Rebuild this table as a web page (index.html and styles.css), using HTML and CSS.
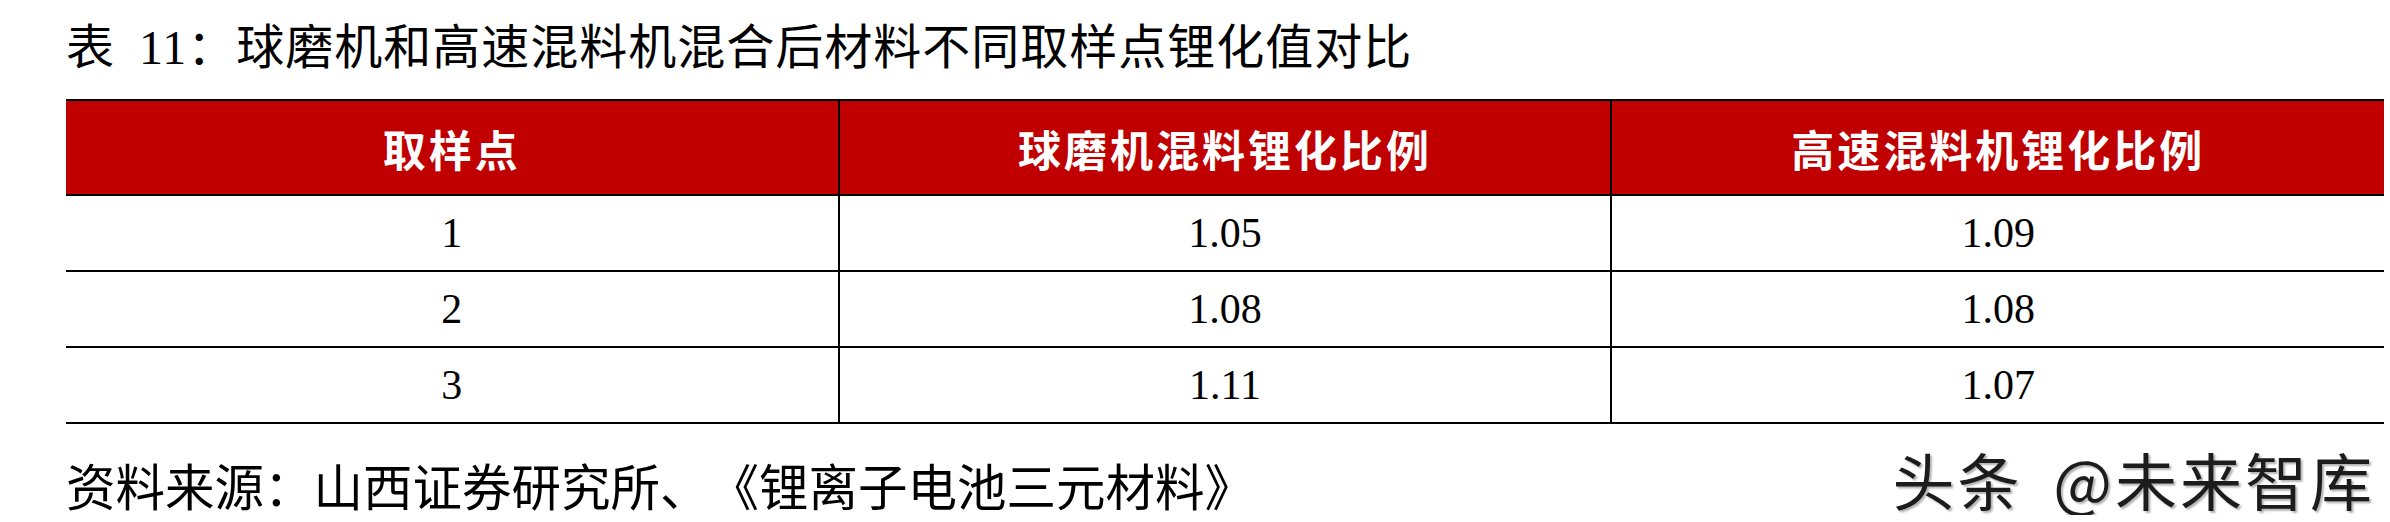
FILE: index.html
```html
<!DOCTYPE html>
<html lang="zh-CN">
<head>
<meta charset="utf-8">
<title>表11</title>
<link rel="stylesheet" href="styles.css">
</head>
<body>
<div class="page">
  <h1 class="title">表<span class="num">11</span>：球磨机和高速混料机混合后材料不同取样点锂化值对比</h1>
  <table class="data">
    <thead>
      <tr><th>取样点</th><th>球磨机混料锂化比例</th><th>高速混料机锂化比例</th></tr>
    </thead>
    <tbody>
      <tr><td>1</td><td>1.05</td><td>1.09</td></tr>
      <tr><td>2</td><td>1.08</td><td>1.08</td></tr>
      <tr><td>3</td><td>1.11</td><td>1.07</td></tr>
    </tbody>
  </table>
  <div class="footer">
    <span class="source">资料来源：山西证券研究所、《锂离子电池三元材料》</span>
    <span class="mark">头条 @未来智库</span>
  </div>
</div>
</body>
</html>
```
FILE: styles.css
```css
body {
  margin: 0;
  background: #fff;
}
.page {
  padding: 20px 6px 0 66px;
  text-spacing-trim: space-all;
}
.title {
  margin: 0 0 23px;
  font-family: "Liberation Serif", "Noto Sans CJK SC", sans-serif;
  font-weight: 400;
  font-size: 48px;
  line-height: 56px;
  letter-spacing: 1px;
  color: #000;
  white-space: nowrap;
}
.title .num {
  margin-left: 24px;
}
.data {
  width: 100%;
  table-layout: fixed;
  border-collapse: collapse;
}
.data th {
  background: #c00000;
  color: #fff;
  font-family: "Noto Sans CJK SC", sans-serif;
  font-weight: 700;
  font-size: 43px;
  letter-spacing: 3px;
  height: 93px;
  padding: 0;
  border-top: 2px solid #000;
  border-bottom: 2px solid #000;
  text-align: center;
  vertical-align: middle;
}
.data th + th,
.data td + td {
  border-left: 2px solid #000;
}
.data td {
  font-family: "Liberation Serif", serif;
  font-size: 42px;
  color: #000;
  text-align: center;
  vertical-align: middle;
  height: 74px;
  padding: 0;
  border-bottom: 2px solid #000;
}
.footer {
  margin-top: 25px;
  padding-right: 9px;
  display: flex;
  justify-content: space-between;
  align-items: baseline;
  line-height: 60px;
  white-space: nowrap;
}
.source {
  font-family: "Noto Sans CJK SC", sans-serif;
  font-size: 49.5px;
  color: #000;
}
.mark {
  font-family: "Noto Sans CJK SC", sans-serif;
  font-size: 62px;
  letter-spacing: 3px;
  word-spacing: 14px;
  color: #1c1c1c;
  text-shadow: 2px 2px 2px rgba(0, 0, 0, 0.3), -1px -1px 0 #fff;
}
```
